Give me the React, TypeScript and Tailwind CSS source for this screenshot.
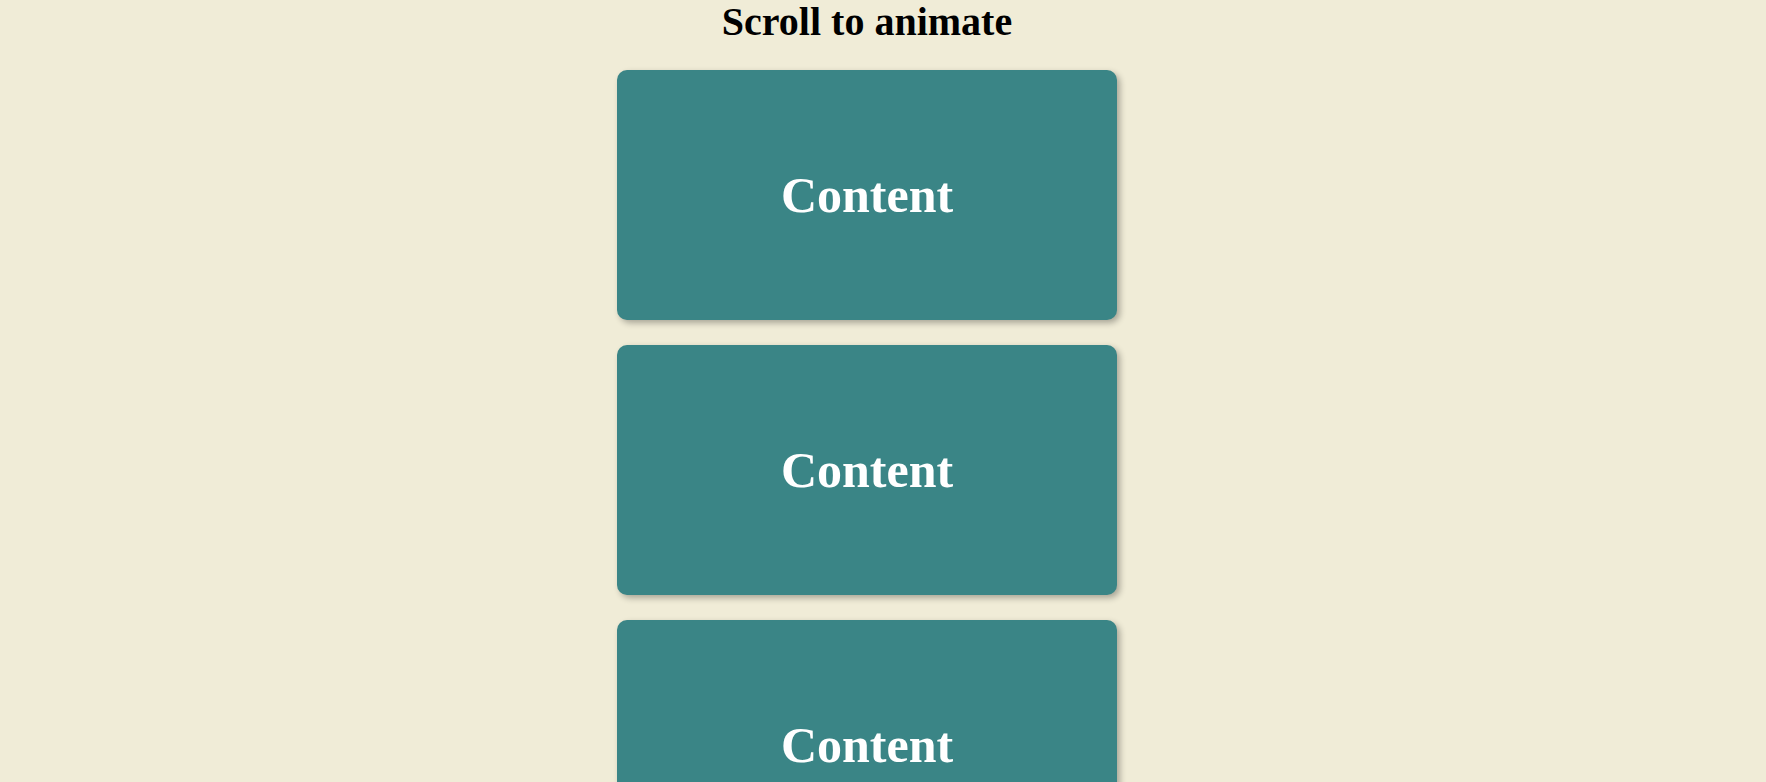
export default function App() {
  const cards = [1, 2, 3, 4];
  return (
    <div className="min-h-screen bg-[#f0ecd7] font-['Liberation_Serif',serif] overflow-hidden">
      <div className="w-[1734px] flex flex-col items-center">
        <h1 className="text-[40px] leading-[46px] font-bold text-black -mt-[1px]">Scroll to animate</h1>
        <div className="mt-[25px] flex flex-col gap-[25px]">
          {cards.map((c) => (
            <div
              key={c}
              className="w-[500px] h-[250px] rounded-[10px] bg-[#3a8586] shadow-[3px_3px_6px_rgba(0,0,0,0.3)] flex items-center justify-center"
            >
              <span className="text-[50px] font-bold text-white">Content</span>
            </div>
          ))}
        </div>
      </div>
    </div>
  );
}
